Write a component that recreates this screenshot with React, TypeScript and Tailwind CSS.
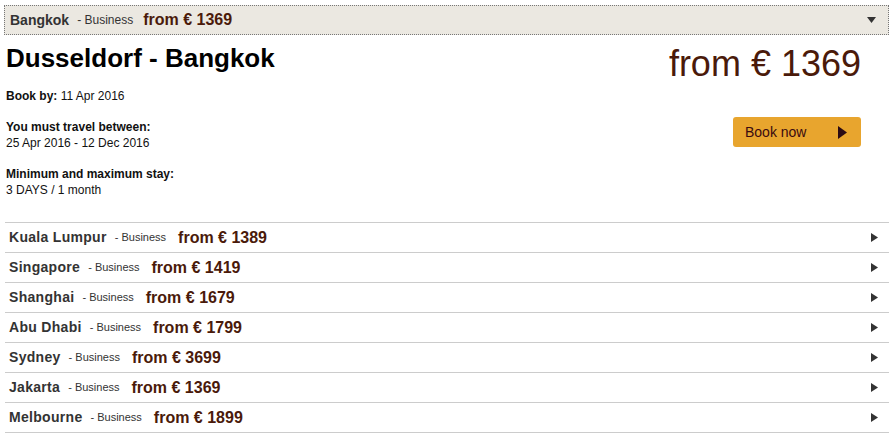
const rows = [
  { city: 'Kuala Lumpur', price: '1389' },
  { city: 'Singapore', price: '1419' },
  { city: 'Shanghai', price: '1679' },
  { city: 'Abu Dhabi', price: '1799' },
  { city: 'Sydney', price: '3699' },
  { city: 'Jakarta', price: '1369' },
  { city: 'Melbourne', price: '1899' },
]

function Arrow() {
  return (
    <svg width="7" height="9" viewBox="0 0 7 9" className="fill-[#333]">
      <path d="M0 0 L7 4.5 L0 9 Z" />
    </svg>
  )
}

export default function App() {
  return (
    <div className="min-h-screen bg-white pt-[5px] font-['Liberation_Sans',Arial,sans-serif] text-[#111]">
      {/* Selected destination header */}
      <div className="mx-[4px] flex h-[30px] items-center border border-dotted border-[#777] bg-[#ebe8e1] pl-[5px] pr-[12px]">
        <span className="text-[14px] font-bold text-[#333]">Bangkok</span>
        <span className="ml-[8px] text-[12px] text-[#333]">- Business</span>
        <span className="ml-[10px] text-[16px] font-bold text-[#4a1a0a]">from € 1369</span>
        <svg width="9" height="6" viewBox="0 0 9 6" className="ml-auto fill-[#333]">
          <path d="M0 0 L9 0 L4.5 6 Z" />
        </svg>
      </div>

      {/* Details */}
      <div className="flex px-[6px] pb-[24px] pt-[7px]">
        <div className="flex-1">
          <h1 className="text-[26px] font-bold leading-[32px] text-black">Dusseldorf - Bangkok</h1>
          <p className="mt-[14px] text-[12px] leading-[16px]">
            <b>Book by:</b> 11 Apr 2016
          </p>
          <p className="mt-[15px] text-[12px] leading-[16px]">
            <b>You must travel between:</b>
            <br />
            25 Apr 2016 - 12 Dec 2016
          </p>
          <p className="mt-[15px] text-[12px] leading-[16px]">
            <b>Minimum and maximum stay:</b>
            <br />
            3 DAYS / 1 month
          </p>
        </div>
        <div className="flex flex-col items-end pr-[26px]">
          <div className="text-[36px] leading-[44px] text-[#4a1a0a]">from € 1369</div>
          <button className="mt-[31px] flex h-[30px] w-[128px] items-center justify-between rounded-[3px] bg-[#e8a52e] pl-[12px] pr-[14px] text-[14px] text-[#3a0a10]">
            Book now
            <svg width="9" height="13" viewBox="0 0 9 13" className="fill-[#2a0a14]">
              <path d="M0 0 L9 6.5 L0 13 Z" />
            </svg>
          </button>
        </div>
      </div>

      {/* Other destinations */}
      <div className="mx-[5px] mr-[4px] border-t border-[#ccc]">
        {rows.map((r) => (
          <div key={r.city} className="flex h-[30px] items-center border-b border-[#ccc] pl-[4px] pr-[11px]">
            <span className="text-[14px] font-bold tracking-[0.3px] text-[#333]">{r.city}</span>
            <span className="ml-[8px] text-[11px] text-[#333]">- Business</span>
            <span className="ml-[12px] text-[16px] font-bold text-[#4a1a0a]">from € {r.price}</span>
            <span className="ml-auto">
              <Arrow />
            </span>
          </div>
        ))}
      </div>
    </div>
  )
}
